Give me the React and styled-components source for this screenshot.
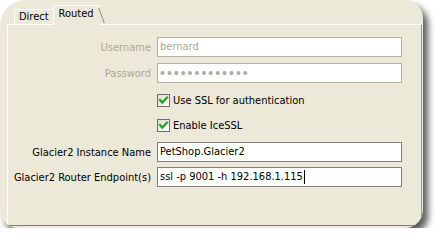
import React from "react";
import styled, { createGlobalStyle } from "styled-components";

const Global = createGlobalStyle`
  html, body { margin: 0; padding: 0; background: #ffffff; }
  body { font-family: "DejaVu Sans Condensed", "Liberation Sans", Arial, sans-serif; font-size: 11px; color: #000; }
`;

const Card = styled.div`
  width: 423px;
  height: 228px;
  box-sizing: border-box;
  background: #ece9d8;
  border-radius: 26px 18px 18px 18px;
  box-shadow: 5px 6px 7px rgba(0, 0, 0, 0.65);
  overflow: hidden;
  padding: 5px 0 0 7px;
`;

const TabStrip = styled.div`
  display: flex;
  align-items: flex-end;
  height: 19px;
  padding-left: 7px;
  position: relative;
  z-index: 1;
`;

const Tab = styled.div`
  position: relative;
  box-sizing: border-box;
  height: ${(p) => (p.$active ? "20px" : "15px")};
  margin-bottom: ${(p) => (p.$active ? "-1px" : "0")};
  margin-left: ${(p) => (p.$active ? "-2px" : "0")};
  z-index: ${(p) => (p.$active ? 2 : 1)};
  padding: ${(p) => (p.$active ? "1px 6px 0 5px" : "0 6px 0 4px")};
  line-height: 13px;
  border-top: 1px solid #ffffff;
  border-left: 1px solid #ffffff;
  border-top-left-radius: 3px;
  background: #ece9d8;
  white-space: nowrap;
  &::after {
    content: "";
    position: absolute;
    right: -2px;
    top: 2px;
    bottom: ${(p) => (p.$active ? "2px" : "0")};
    width: 1px;
    background: #8e8c82;
    transform: skewX(20deg);
  }
`;

const Panel = styled.div`
  width: 415px;
  height: 202px;
  box-sizing: border-box;
  border-top: 1px solid #ffffff;
  border-left: 1px solid #ffffff;
  border-right: 1px solid #9c9a8e;
  border-bottom: 1px solid #7f7d74;
  display: flex;
  flex-direction: column;
  padding-top: 12px;
`;

const Row = styled.div`
  display: grid;
  grid-template-columns: 143px 245px;
  column-gap: 6px;
  align-items: center;
  height: ${(p) => p.$h}px;
  margin-top: ${(p) => p.$mt}px;
`;

const Label = styled.div`
  text-align: right;
  white-space: nowrap;
  color: ${(p) => (p.$disabled ? "#aca899" : "#000000")};
`;

const Field = styled.div`
  box-sizing: border-box;
  height: 20px;
  border: 1px solid ${(p) => (p.$disabled ? "#b4b1a3" : "#7f7f7f")};
  background: #ffffff;
  padding: 0 2px;
  line-height: 18px;
  color: ${(p) => (p.$disabled ? "#aca899" : "#000000")};
  white-space: nowrap;
  overflow: hidden;
  display: flex;
  align-items: center;
`;

const Dots = styled.span`
  font-family: "Liberation Sans", Arial, sans-serif;
  font-size: 14px;
  letter-spacing: 2px;
  color: #b0ad9f;
`;

const Caret = styled.span`
  display: inline-block;
  width: 1px;
  height: 14px;
  background: #000;
  margin-left: 1px;
`;

const CheckLine = styled.label`
  grid-column: 2;
  display: flex;
  align-items: center;
  gap: 3px;
  height: 13px;
`;

const Box = styled.span`
  box-sizing: border-box;
  width: 13px;
  height: 13px;
  border: 1px solid #6f6f6f;
  background: linear-gradient(135deg, #dcdcd5 0%, #f2f2ee 60%, #ffffff 100%);
  display: flex;
  align-items: center;
  justify-content: center;
`;

const Check = () => (
  <svg width="11" height="11" viewBox="0 0 11 11">
    <polyline
      points="2,5 4.3,7.6 9,2.6"
      fill="none"
      stroke="#21a121"
      strokeWidth="2.2"
      strokeLinecap="square"
    />
  </svg>
);

const CheckBox = ({ children }) => (
  <CheckLine>
    <Box>
      <Check />
    </Box>
    <span>{children}</span>
  </CheckLine>
);

export default function App() {
  return (
    <>
      <Global />
      <Card>
        <TabStrip>
          <Tab>Direct</Tab>
          <Tab $active>Routed</Tab>
        </TabStrip>
        <Panel>
          <Row $h={20} $mt={0}>
            <Label $disabled>Username</Label>
            <Field $disabled>bernard</Field>
          </Row>
          <Row $h={20} $mt={6}>
            <Label $disabled>Password</Label>
            <Field $disabled>
              <Dots>•••••••••••••</Dots>
            </Field>
          </Row>
          <Row $h={13} $mt={11}>
            <CheckBox>Use SSL for authentication</CheckBox>
          </Row>
          <Row $h={13} $mt={12}>
            <CheckBox>Enable IceSSL</CheckBox>
          </Row>
          <Row $h={20} $mt={10}>
            <Label>Glacier2 Instance Name</Label>
            <Field>PetShop.Glacier2</Field>
          </Row>
          <Row $h={20} $mt={5}>
            <Label>Glacier2 Router Endpoint(s)</Label>
            <Field>
              ssl -p 9001 -h 192.168.1.115
              <Caret />
            </Field>
          </Row>
        </Panel>
      </Card>
    </>
  );
}
